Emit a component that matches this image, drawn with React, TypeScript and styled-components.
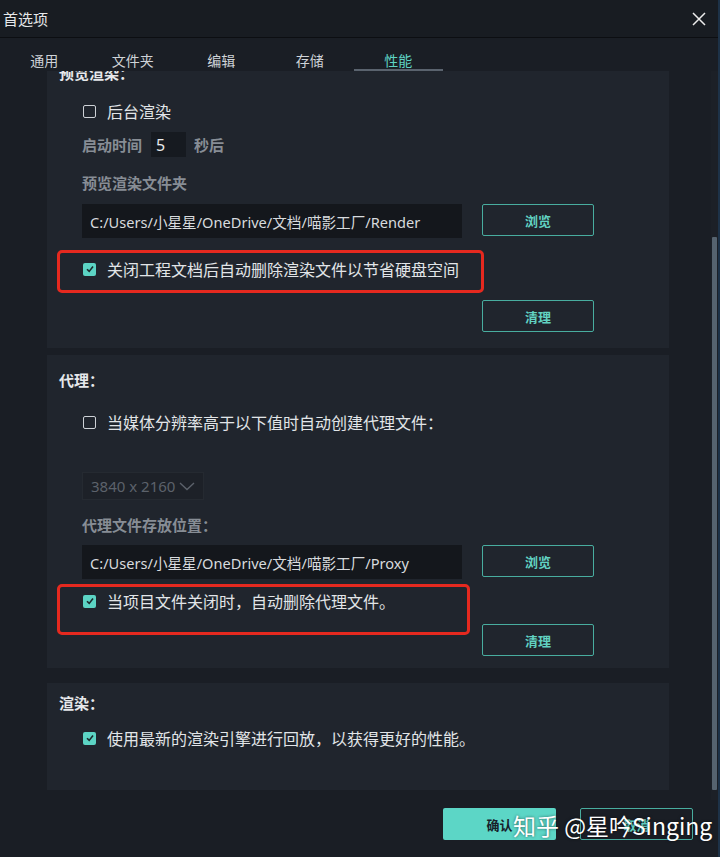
import React, { useLayoutEffect, useRef } from 'react';
import styled, { createGlobalStyle } from 'styled-components';

const GlobalStyle = createGlobalStyle`
  html, body {
    margin: 0;
    padding: 0;
    background: #1a1e25;
  }
  body {
    font-family: "Noto Sans", "Noto Sans CJK SC", sans-serif;
  }
`;

const Window = styled.div`
  width: 720px;
  height: 857px;
  display: flex;
  flex-direction: column;
  background: #1a1e25;
  color: #dfe2e5;
  border-right: 2px solid #1d3248;
  box-sizing: border-box;
  overflow: hidden;
  position: relative;
`;

const TitleBar = styled.div`
  height: 38px;
  flex: none;
  display: flex;
  align-items: center;
  justify-content: space-between;
  padding: 0 12px 0 3px;
  background: #181c22;
  border-bottom: 1px solid #0c0e12;
  box-sizing: border-box;
`;

const Title = styled.div`
  font-family: "Noto Sans CJK SC", sans-serif;
  font-size: 15px;
  color: #e6e8ea;
`;

const CloseButton = styled.button`
  width: 14px;
  height: 14px;
  padding: 0;
  border: 0;
  background: none;
  display: flex;
  color: #ececec;
`;

const TabBar = styled.div`
  height: 33px;
  flex: none;
  display: flex;
  background: #1a1e25;
`;

const Tab = styled.div<{ $active?: boolean }>`
  width: 88.5px;
  box-sizing: border-box;
  padding-top: 12px;
  display: flex;
  align-items: center;
  justify-content: center;
  font-family: "Noto Sans CJK SC", sans-serif;
  font-size: 14px;
  color: ${p => (p.$active ? '#5fd3c4' : '#cfd3d8')};
  border-bottom: 2px solid ${p => (p.$active ? '#5a636e' : 'transparent')};
`;

const Body = styled.div`
  flex: 1;
  min-height: 0;
  display: flex;
`;

const Viewport = styled.div`
  flex: 1;
  overflow-y: auto;
  scrollbar-width: none;
  &::-webkit-scrollbar {
    display: none;
  }
`;

const Content = styled.div`
  padding: 0 0 40px 47px;
  display: flex;
  flex-direction: column;
`;

const Panel = styled.section<{ $mt: number; $pt: number; $pb: number }>`
  width: 622px;
  box-sizing: border-box;
  margin-top: ${p => p.$mt}px;
  padding: ${p => p.$pt}px 0 ${p => p.$pb}px 12px;
  background: #20252d;
  display: flex;
  flex-direction: column;
`;

const SectionTitle = styled.h3`
  margin: 0;
  font-family: "Noto Sans CJK SC", sans-serif;
  font-size: 15px;
  font-weight: 700;
  line-height: 20px;
  color: #e6e8eb;
`;

const Fields = styled.div`
  width: 512px;
  margin-left: 23px;
  display: flex;
  flex-direction: column;
`;

const CheckRow = styled.label<{ $mt: number }>`
  position: relative;
  height: 24px;
  margin-top: ${p => p.$mt}px;
  display: flex;
  align-items: center;
  gap: 11px;
  font-family: "Noto Sans CJK SC", sans-serif;
  font-size: 16px;
  color: #e2e5e8;
`;

const Box = styled.span<{ $checked?: boolean }>`
  width: 13px;
  height: 13px;
  margin-left: 1px;
  flex: none;
  box-sizing: border-box;
  border-radius: 2px;
  display: flex;
  align-items: center;
  justify-content: center;
  border: ${p => (p.$checked ? 'none' : '1.5px solid #cdd1d6')};
  background: ${p => (p.$checked ? '#5cd4c4' : 'transparent')};
`;

const Annotation = styled.span<{ $left: number; $top: number; $w: number; $h: number }>`
  position: absolute;
  left: ${p => p.$left}px;
  top: ${p => p.$top}px;
  width: ${p => p.$w}px;
  height: ${p => p.$h}px;
  box-sizing: border-box;
  border: 3px solid #e5291f;
  border-radius: 5px;
  pointer-events: none;
`;

const FieldRow = styled.div<{ $mt: number }>`
  height: 25px;
  margin-top: ${p => p.$mt}px;
  display: flex;
  align-items: center;
`;

const FieldLabel = styled.div<{ $mt?: number }>`
  margin-top: ${p => p.$mt ?? 0}px;
  font-family: "Noto Sans CJK SC", sans-serif;
  font-size: 15px;
  font-weight: 700;
  line-height: 20px;
  color: #878d95;
`;

const NumberBox = styled.div`
  width: 35px;
  height: 25px;
  margin: 0 8px 0 9px;
  padding-left: 5px;
  box-sizing: border-box;
  background: #161a20;
  display: flex;
  align-items: center;
  font-size: 16px;
  color: #e8eaec;
`;

const PathRow = styled.div<{ $mt: number }>`
  margin-top: ${p => p.$mt}px;
  display: flex;
  align-items: flex-start;
  gap: 20px;
`;

const PathInput = styled.div`
  flex: 1;
  height: 34px;
  padding-left: 8px;
  box-sizing: border-box;
  background: #14171c;
  display: flex;
  align-items: center;
  font-family: "Noto Sans", "Noto Sans CJK SC", sans-serif;
  font-size: 14.6px;
  color: #d8dbde;
  white-space: nowrap;
`;

const OutlineButton = styled.button`
  width: 112px;
  height: 32px;
  flex: none;
  box-sizing: border-box;
  border: 1.5px solid #48ad9f;
  border-radius: 2px;
  background: transparent;
  font-family: "Noto Sans CJK SC", sans-serif;
  font-size: 13px;
  font-weight: 700;
  color: #62d2c2;
`;

const ActionRow = styled.div<{ $mt: number }>`
  margin-top: ${p => p.$mt}px;
  display: flex;
  justify-content: flex-end;
`;

const Dropdown = styled.div<{ $mt: number }>`
  width: 122px;
  height: 28px;
  margin-top: ${p => p.$mt}px;
  padding: 0 8px;
  box-sizing: border-box;
  background: #1d2128;
  border: 1px solid #252a31;
  display: flex;
  align-items: center;
  justify-content: space-between;
  font-size: 15px;
  color: #5c626b;
`;

const ScrollTrack = styled.div`
  width: 7px;
  flex: none;
  padding-top: 166px;
  background: #1c2027;
`;

const Thumb = styled.div`
  width: 5px;
  height: 553px;
  margin-left: 1px;
  border-radius: 1px;
  background: #56636f;
`;

const Footer = styled.div`
  height: 57px;
  flex: none;
  position: relative;
  display: flex;
  justify-content: flex-end;
  align-items: flex-start;
  gap: 24px;
  padding: 8px 25px 0 0;
  box-sizing: border-box;
`;

const PrimaryButton = styled.button`
  width: 113px;
  height: 32px;
  border: 0;
  border-radius: 2px;
  background: #5cd6c6;
  font-family: "Noto Sans CJK SC", sans-serif;
  font-size: 13px;
  font-weight: 700;
  color: #17202a;
`;

const CancelButton = styled(OutlineButton)`
  width: 113px;
`;

const Watermark = styled.div`
  position: absolute;
  left: 513px;
  top: 9px;
  font-family: "Noto Sans CJK SC", sans-serif;
  font-size: 23px;
  line-height: 32px;
  color: #ffffff;
  text-shadow: 0 0 3px rgba(0, 0, 0, 0.55);
  white-space: nowrap;
  pointer-events: none;
`;

const CheckMark = () => (
  <svg width="10" height="10" viewBox="0 0 10 10">
    <path d="M2 5.2 L4.2 7.4 L8 2.6" fill="none" stroke="#1b2a2c" strokeWidth="1.6" />
  </svg>
);

const Checkbox: React.FC<{ checked?: boolean }> = ({ checked }) => (
  <Box $checked={checked}>{checked && <CheckMark />}</Box>
);

const tabs = ['通用', '文件夹', '编辑', '存储', '性能'];

export default function App() {
  const viewRef = useRef<HTMLDivElement>(null);

  useLayoutEffect(() => {
    if (viewRef.current) viewRef.current.scrollTop = 22;
  }, []);

  return (
    <>
      <GlobalStyle />
      <Window>
        <TitleBar>
          <Title>首选项</Title>
          <CloseButton aria-label="关闭">
            <svg width="14" height="14" viewBox="0 0 14 14">
              <path d="M1 1 L13 13 M13 1 L1 13" stroke="currentColor" strokeWidth="1.5" />
            </svg>
          </CloseButton>
        </TitleBar>

        <TabBar>
          {tabs.map(t => (
            <Tab key={t} $active={t === '性能'}>
              {t}
            </Tab>
          ))}
        </TabBar>

        <Body>
          <Viewport ref={viewRef}>
            <Content>
              <Panel $mt={0} $pt={14} $pb={16}>
                <SectionTitle>预览渲染：</SectionTitle>
                <Fields>
                  <CheckRow $mt={16}>
                    <Checkbox />
                    后台渲染
                  </CheckRow>
                  <FieldRow $mt={9}>
                    <FieldLabel>启动时间</FieldLabel>
                    <NumberBox>5</NumberBox>
                    <FieldLabel>秒后</FieldLabel>
                  </FieldRow>
                  <FieldLabel $mt={16}>预览渲染文件夹</FieldLabel>
                  <PathRow $mt={11}>
                    <PathInput>C:/Users/小星星/OneDrive/文档/喵影工厂/Render</PathInput>
                    <OutlineButton>浏览</OutlineButton>
                  </PathRow>
                  <CheckRow $mt={19}>
                    <Checkbox checked />
                    关闭工程文档后自动删除渲染文件以节省硬盘空间
                    <Annotation $left={-25} $top={-7} $w={427} $h={43} />
                  </CheckRow>
                  <ActionRow $mt={19}>
                    <OutlineButton>清理</OutlineButton>
                  </ActionRow>
                </Fields>
              </Panel>

              <Panel $mt={7} $pt={15} $pb={12}>
                <SectionTitle>代理：</SectionTitle>
                <Fields>
                  <CheckRow $mt={20}>
                    <Checkbox />
                    当媒体分辨率高于以下值时自动创建代理文件：
                  </CheckRow>
                  <Dropdown $mt={38}>
                    3840 x 2160
                    <svg width="16" height="10" viewBox="0 0 16 10">
                      <path d="M1 2 L8 8.5 L15 2" fill="none" stroke="#5c626b" strokeWidth="1.4" />
                    </svg>
                  </Dropdown>
                  <FieldLabel $mt={15}>代理文件存放位置：</FieldLabel>
                  <PathRow $mt={10}>
                    <PathInput>C:/Users/小星星/OneDrive/文档/喵影工厂/Proxy</PathInput>
                    <OutlineButton>浏览</OutlineButton>
                  </PathRow>
                  <CheckRow $mt={10}>
                    <Checkbox checked />
                    当项目文件关闭时，自动删除代理文件。
                    <Annotation $left={-25} $top={-5} $w={413} $h={51} />
                  </CheckRow>
                  <ActionRow $mt={11}>
                    <OutlineButton>清理</OutlineButton>
                  </ActionRow>
                </Fields>
              </Panel>

              <Panel $mt={15} $pt={10} $pb={40}>
                <SectionTitle>渲染：</SectionTitle>
                <Fields>
                  <CheckRow $mt={13}>
                    <Checkbox checked />
                    使用最新的渲染引擎进行回放，以获得更好的性能。
                  </CheckRow>
                </Fields>
              </Panel>
            </Content>
          </Viewport>
          <ScrollTrack>
            <Thumb />
          </ScrollTrack>
        </Body>

        <Footer>
          <PrimaryButton>确认</PrimaryButton>
          <CancelButton>取消</CancelButton>
          <Watermark>知乎 @星吟Singing</Watermark>
        </Footer>
      </Window>
    </>
  );
}
